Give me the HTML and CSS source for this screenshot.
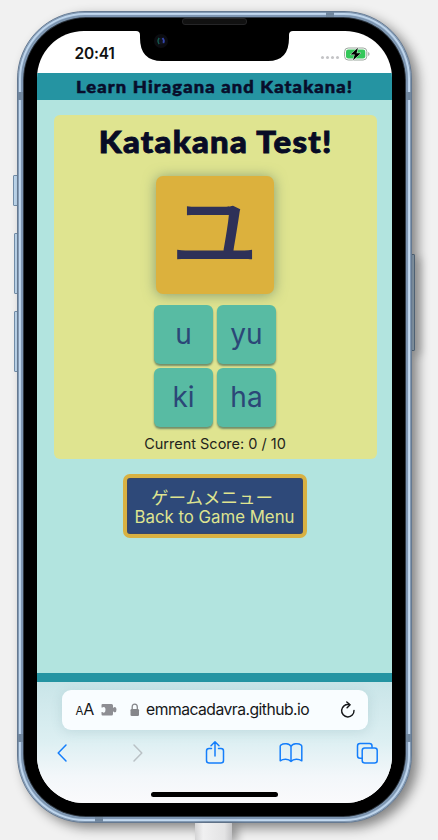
FILE: index.html
```html
<!DOCTYPE html>
<html lang="en">
<head>
<meta charset="utf-8">
<title>Learn Hiragana and Katakana!</title>
<link rel="stylesheet" href="styles.css">
</head>
<body>
<div class="side-key mute"></div>
<div class="side-key volume-up"></div>
<div class="side-key volume-down"></div>
<div class="side-key power"></div>
<div class="phone">
  <i class="band band-top"></i><i class="band band-bottom"></i>
  <i class="band band-left-top"></i><i class="band band-left-bottom"></i>
  <i class="band band-right-top"></i><i class="band band-right-bottom"></i>
  <div class="bezel">
    <div class="screen">
      <div class="status">
        <span class="time">20:41</span>
        <span class="signal"><i></i><i></i><i></i><i></i></span>
        <svg class="battery" width="26" height="14" viewBox="0 0 26 14">
          <rect x=".6" y="1" width="22.2" height="12" rx="3.6" fill="#fff" stroke="#9aa59c"/>
          <rect x="2" y="2.5" width="19.3" height="9" rx="2.3" fill="#34c759"/>
          <path d="M24.2 5v4q1.3-.6 1.3-2t-1.3-2Z" fill="#9aa59c"/>
          <path d="M14 .8 6.6 7.6h4.2L9 13.3l7.8-7.1h-4.3Z" fill="#000" stroke="#fff" stroke-width=".8" paint-order="stroke"/>
        </svg>
      </div>
      <header class="site-header"><span>Learn Hiragana and Katakana!</span></header>
      <main class="page">
        <section class="quiz">
          <h1>Katakana Test!</h1>
          <div class="kana" lang="ja"><span>ユ</span></div>
          <div class="answers">
            <button>u</button><button>yu</button>
            <button>ki</button><button>ha</button>
          </div>
          <p class="score">Current Score: 0 / 10</p>
        </section>
        <button class="menu"><span class="menu-ja" lang="ja">ゲームメニュー</span><span class="menu-en">Back to Game Menu</span></button>
      </main>
      <footer class="site-footer"></footer>
      <div class="browser">
        <div class="address">
          <span class="aa"><small>A</small>A</span>
          <svg class="puzzle" width="16" height="14" viewBox="0 0 16 14"><path fill="#8e8e93" d="M1.5 1h9Q12 1 12 2.5v2.3h.5q.4-.9 1.4-.9 1.6 0 1.6 2.7t-1.6 2.7q-1 0-1.4-.9H12V11q0 1.5-1.5 1.5h-9Q.5 12.500.5 11V9h1q.3.7 1.300.7 1.700 0 1.700-2.900t-1.700-2.900q-1 0-1.300.7h-1V2.300Q.5 1 1.500 1Z"/></svg>
          <svg class="lock" width="10" height="14" viewBox="0 0 10 14"><rect x=".5" y="6" width="8.500" height="7" rx="1.300" fill="#85868a"/><path d="M2.200 6.500V4Q2.200 1.200 4.750 1.200T7.300 4v2.500" fill="none" stroke="#85868a" stroke-width="1.300"/></svg>
          <span class="url">emmacadavra.github.io</span>
          <svg class="reload" width="16" height="18" viewBox="0 0 16 18" fill="none" stroke="#151719" stroke-width="1.450" stroke-linecap="round" stroke-linejoin="round"><path d="M8.800 3.600A6.200 6.200 0 1 0 14 9.400"/><path d="m6.800 1 3.300 2.700-3 3"/></svg>
        </div>
        <nav class="toolbar">
          <span><svg width="12" height="20" viewBox="0 0 12 20"><path d="M10 2 2.200 10l7.800 8" stroke="#147efb"/></svg></span>
          <span><svg width="12" height="20" viewBox="0 0 12 20"><path d="m2 2 7.800 8L2 18" stroke="#b9c1c5"/></svg></span>
          <span><svg width="20" height="26" viewBox="0 0 20 26"><path d="M6.500 8.500H4Q1.500 8.500 1.500 11v9.500Q1.500 23 4 23h12q2.500 0 2.500-2.500V11q0-2.500-2.500-2.500h-2.500M10 16V2M6 5.800l4-4 4 4" stroke="#147efb"/></svg></span>
          <span><svg width="24" height="22" viewBox="0 0 24 22"><path d="M12 4.500C10.500 1.300 4.500 1 2 3q-.8.500-.8 1.500v14.300c3-2 8.300-2.200 10.800.6 2.500-2.800 7.800-2.600 10.800-.6V4.500Q22.800 3.500 22 3C19.500 1 13.500 1.300 12 4.500Zm0 0v14.900" stroke="#147efb"/></svg></span>
          <span><svg width="23" height="23" viewBox="0 0 23 23"><path d="M6 16.300H4Q1.500 16.300 1.500 13.800V4Q1.500 1.500 4 1.500h9.500Q16 1.500 16 4v1.600" stroke="#147efb"/><rect x="6.200" y="6" width="15" height="15" rx="2.500" stroke="#147efb"/></svg></span>
        </nav>
        <div class="home-bar"></div>
      </div>
    </div>
    <svg class="notch" width="169" height="32" viewBox="0 0 169 32"><path d="M0 0V1H6Q10 1 10 5V8Q10 31 32 31H138Q159 31 159 8V5Q159 1 163 1H169V0Z"/></svg>
    <div class="speaker"></div>
    <svg class="camera" width="16" height="16" viewBox="0 0 16 16"><circle cx="8" cy="8" r="7" fill="#0b0c10"/><circle cx="8" cy="8" r="3.500" fill="#11131d"/><path d="M6.200 5Q3.800 8 6.200 11" fill="none" stroke="#146052" stroke-width="1.300"/><path d="M9.500 5q2.300 2.500.8 5" fill="none" stroke="#3546ad" stroke-width="1.800"/></svg>
  </div>
</div>
<div class="cable"></div>
</body>
</html>
```
FILE: styles.css
```css
* { box-sizing: border-box; }
body {
  position: relative;
  margin: 0;
  width: 438px;
  height: 840px;
  padding: 11px 0 0 17px;
  overflow: hidden;
  background: #f1f1f1;
  font-family: "Liberation Sans", sans-serif;
}
button { border: 0; padding: 0; margin: 0; font: inherit; }
.phone {
  position: relative;
  width: 394.500px;
  height: 812px;
  padding: 6px 5.500px 6px 6px;
  border: 1px solid #657991;
  border-radius: 68px;
  background: #a9c3de;
  box-shadow: inset 0 0 0 1px #8299b3, inset 0 0 1px 3px #c1d8ef, inset 0 0 1px 5px #7891ad, 6px 5px 12px rgba(0,0,0,.45);
}
.bezel {
  position: relative;
  width: 100%;
  height: 100%;
  padding: 13px;
  border-radius: 62px;
  background: #000;
  box-shadow: 0 0 0 1px #303a45;
}
.screen {
  display: flex;
  flex-direction: column;
  width: 355px;
  height: 772px;
  overflow: hidden;
  border-radius: 47px;
  background: #fff;
}
.status {
  display: flex;
  align-items: center;
  height: 42px;
  padding: 4px 22px 0 37.500px;
  font-family: Inter, sans-serif;
}
.time { font-size: 15.500px; font-weight: 600; letter-spacing: -.2px; color: #111; }
.signal { display: flex; gap: 2px; margin: 8px 5px 0 auto; }
.signal i { width: 3px; height: 3px; border-radius: 50%; background: #c4c4c6; }
.site-header {
  height: 27px;
  background: #2594a2;
  color: #080d2b;
  text-align: center;
  font: 900 17px/27px Lato, sans-serif;
  letter-spacing: 1.050px;
  white-space: nowrap;
}
.site-header span {
  display: inline-block;
  transform: scaleX(1.078);
  -webkit-text-stroke: .5px #080d2b;
}
.page {
  display: flex;
  flex-direction: column;
  align-items: center;
  height: 573.500px;
  flex: none;
  padding-top: 15px;
  background: #b2e4df;
}
.quiz {
  display: flex;
  flex-direction: column;
  align-items: center;
  width: 323px;
  height: 344.500px;
  margin-left: 2px;
  border-radius: 6px;
  background: #dfe490;
}
h1 {
  margin: 6px 0 0;
  color: #080b25;
  font: 900 30px/40px Lato, sans-serif;
  letter-spacing: 1.200px;
  transform: scaleX(1.095);
  -webkit-text-stroke: .9px #080b25;
}
.kana {
  display: flex;
  align-items: center;
  justify-content: center;
  width: 118px;
  height: 117.500px;
  margin-top: 15.500px;
  margin-right: 2px;
  border-radius: 7px;
  background: #dcb13d;
  color: #2e3158;
  box-shadow: 0 1px 13px rgba(78,109,92,.6);
  font: 500 88px/117px "Noto Sans CJK JP", sans-serif;
}
.kana span { transform: translateY(-7.500px) scaleY(.94); }
.answers {
  display: grid;
  grid-template-columns: 58.500px 58.500px;
  grid-template-rows: 59px 59px;
  gap: 4px 4.500px;
  margin: 11px 1px 0 0;
  position: relative;
}
.answers button {
  border-radius: 6px;
  background: #58bba3;
  color: #2b4777;
  box-shadow: 0 2px 2px rgba(44,84,77,.6);
  font: 28px/58px Inter, sans-serif;
}
.score { margin: 7px 1px 0 0; color: #22231c; font: 14.500px/20px Inter, sans-serif; white-space: nowrap; }
.menu {
  display: flex;
  flex-direction: column;
  align-items: center;
  width: 184px;
  height: 64px;
  padding-top: 9px;
  margin-top: 14.500px;
  border: 4px solid #d8b142;
  border-radius: 7px;
  background: #2e4979;
  box-shadow: inset 0 0 1px 1px #3b4868;
  color: #dfe490;
}
.menu-ja { margin-right: 5px; font: 17.500px/20px "Noto Sans CJK JP", sans-serif; }
.menu-en { font: 16.800px/20px Inter, sans-serif; white-space: nowrap; }
.site-footer { flex: none; height: 9px; background: #2594a2; }
.browser {
  display: flex;
  flex-direction: column;
  align-items: center;
  height: 121px;
  flex: none;
  padding-top: 8px;
  background: linear-gradient(#c9e5e8, #dceff2 48%, #f3f7fa 78%, #fafafc);
}
.address {
  display: flex;
  align-items: center;
  width: 306px;
  height: 40px;
  flex: none;
  padding: 0 12px 0 14px;
  border-radius: 9px;
  background: #f9fdff;
  box-shadow: 0 2px 12px rgba(70,120,130,.16);
  color: #151719;
  font: 16px/40px Inter, sans-serif;
}
.aa { font-size: 16px; white-space: nowrap; letter-spacing: -.2px; }
.aa small { font-size: 11.500px; }
.puzzle { margin-left: 7px; }
.lock { margin-left: 13px; }
.url { margin-left: 6px; font-size: 15.700px; letter-spacing: -.52px; white-space: nowrap; }
.reload { margin-left: auto; }
.toolbar {
  display: flex;
  align-items: center;
  justify-content: space-between;
  width: 330px;
  height: 26px;
  margin-top: 10px;
  flex: none;
}
.toolbar span { display: flex; justify-content: center; width: 24px; }
.toolbar svg { fill: none; stroke-width: 1.500; stroke-linecap: round; stroke-linejoin: round; }
.home-bar { width: 127px; height: 4.500px; margin-top: 26px; border-radius: 3px; background: #000; flex: none; }
.notch { position: absolute; left: 106px; top: 12px; }
.speaker { position: absolute; left: 158px; top: 0; width: 65px; height: 7px; border: 1px solid #252527; border-radius: 3px; background: #111; }
.camera { position: absolute; left: 129px; top: 15px; }
.side-key { position: absolute; width: 5px; border: 1px solid #7590ab; border-radius: 1px; background: #bfd8ef; }
.mute { left: 13px; top: 175px; height: 31px; }
.volume-up { left: 14px; top: 233px; height: 61px; }
.volume-down { left: 14px; top: 311px; height: 61px; }
.power { left: 411px; top: 254px; width: 4px; height: 97px; box-shadow: 5px 4px 8px rgba(0,0,0,.35); }
.cable { position: absolute; left: 195px; top: 823px; width: 37px; height: 17px; background: linear-gradient(90deg,#d4d4d5,#f0f0f1 22%,#e3e3e4 80%,#c6c6c8); box-shadow: 6px 3px 8px rgba(0,0,0,.3); }
.band { position: absolute; background: #71879f; }
.band-top, .band-bottom { width: 8px; height: 5px; }
.band-left-top, .band-left-bottom, .band-right-top, .band-right-bottom { width: 5px; height: 8px; }
.band-top { left: 308px; top: 0; }
.band-bottom { left: 77px; bottom: 0; }
.band-left-top { left: 0; top: 80px; }
.band-left-bottom { left: 0; bottom: 80px; }
.band-right-top { right: 0; top: 80px; }
.band-right-bottom { right: 0; bottom: 80px; }
```
